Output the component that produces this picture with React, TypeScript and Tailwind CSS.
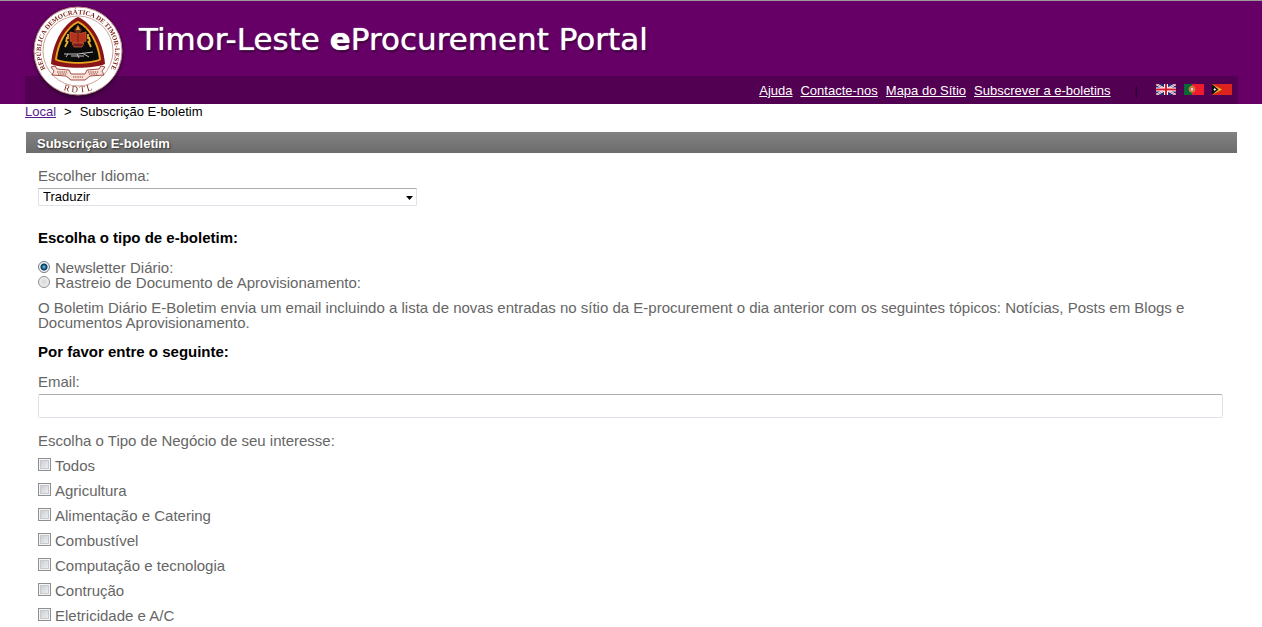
import { useState } from "react";

const navLinks = ["Ajuda", "Contacte-nos", "Mapa do Sítio", "Subscrever a e-boletins"];

const businessTypes = [
  "Todos",
  "Agricultura",
  "Alimentação e Catering",
  "Combustível",
  "Computação e tecnologia",
  "Contrução",
  "Eletricidade e A/C",
];

const radioClass =
  "mt-px size-3 shrink-0 appearance-none rounded-full border border-[#8e8f8f] bg-[radial-gradient(circle,#d4d6d8,#fafafa)] checked:border-[#6e7b85] checked:bg-[radial-gradient(circle_at_50%_50%,#6fd0f2_0px,#1c5f8a_2px,#0d3450_3px,#f4f4f4_4px)]";

const checkboxClass =
  "size-[13px] shrink-0 appearance-none border border-[#8e8f8f] bg-linear-to-br from-[#c3c7cc] to-[#f6f6f6] shadow-[inset_0_0_0_1px_#f4f4f4,inset_0_0_0_2px_#c6cad0] checked:from-[#4b6f9c] checked:to-[#7fa0c8]";

function Seal() {
  return (
    <svg viewBox="0 0 92 92" className="size-[92px] drop-shadow-[0_2px_2px_rgba(0,0,0,0.45)]" role="img" aria-label="República Democrática de Timor-Leste">
      <defs>
        <path id="seal-top" d="M16 68 A37 37 0 1 1 76 68" />
        <path id="seal-bottom" d="M22 80 A42 42 0 0 0 70 80" />
      </defs>
      <circle cx="46" cy="46" r="44" fill="#fff" stroke="#b98d86" strokeWidth="1" />
      <circle cx="46" cy="46" r="35" fill="none" stroke="#c08a80" strokeWidth="0.8" />
      <text fill="#7a1f14" fontSize="6.7" fontWeight="700" fontFamily="'Liberation Serif', serif">
        <textPath href="#seal-top" startOffset="50%" textAnchor="middle">REPÚBLICA DEMOCRÁTICA DE TIMOR-LESTE</textPath>
      </text>
      <path d="M46 12 C58 17 71 34 73 59 C61 64 31 64 19 59 C21 34 34 17 46 12Z" fill="#8a1416" />
      <path d="M46 16 C57 21 67 36 69 55 C59 60 33 60 23 55 C25 36 35 21 46 16Z" fill="#e9a420" />
      <path d="M46 18 C56 23 65 37 67 54 C58 58 34 58 25 54 C27 37 36 23 46 18Z" fill="#0b0b0c" />
      <path d="M46 20 L50 25 L48 28 H44 L42 25Z" fill="#6e2a1c" />
      <path d="M46 20 L48 25 H44Z" fill="#e0a838" />
      <path d="M38 27 L46 29 L54 27 V36 L46 39 L38 36Z" fill="#b2331e" stroke="#d2562e" strokeWidth="0.8" />
      <path d="M46 29 V38" stroke="#7a1712" strokeWidth="1" />
      <path d="M40 38 H52 L50 42 H42Z" fill="#7b1a16" stroke="#cf6a3c" strokeWidth="0.7" />
      <path d="M33 42 L36 36 M34 37 L35 32 M36 34 L36 29 M59 42 L56 36 M58 37 L57 32 M56 34 L56 29" stroke="#e8ae2a" strokeWidth="1.8" fill="none" />
      <path d="M32 49 H46 L61 47 M36 49 L34 52 M45 49 L47 53 M50 48 L57 52 M39 51 H52" stroke="#c4c4c0" strokeWidth="1" fill="none" />
      <path d="M19 62 L23 61 L25 64 L37 65 L39 69 H53 L55 65 L67 64 L69 61 L73 62 L70 66 L72 70 L58 71 L53 75 H39 L34 71 L20 70 L22 66Z" fill="#f6e3dc" stroke="#9b3a2c" strokeWidth="0.9" />
      <path d="M25 67 H36 M26 69 H35 M56 67 H67 M57 69 H66 M41 72 H51" stroke="#9b3a2c" strokeWidth="1.2" strokeDasharray="1.4 0.8" />
      <text fill="#7a1f14" fontSize="9" fontFamily="'Liberation Serif', serif">
        <textPath href="#seal-bottom" startOffset="50%" textAnchor="middle">R D T L</textPath>
      </text>
    </svg>
  );
}

function FlagUK() {
  return (
    <svg viewBox="0 0 20 11" className="h-[11px] w-5">
      <rect width="20" height="11" fill="#1c2f7c" />
      <path d="M0 0 L20 11 M20 0 L0 11" stroke="#fff" strokeWidth="2" />
      <path d="M0 0 L20 11 M20 0 L0 11" stroke="#d5283c" strokeWidth="0.7" />
      <path d="M10 0 V11 M0 5.5 H20" stroke="#fff" strokeWidth="4" />
      <path d="M10 0 V11 M0 5.5 H20" stroke="#d5182e" strokeWidth="2" />
    </svg>
  );
}

function FlagPortugal() {
  return (
    <svg viewBox="0 0 20 11" className="h-[11px] w-5">
      <rect width="20" height="11" fill="#ee1c2e" />
      <rect width="8" height="11" fill="#0b6638" />
      <circle cx="8" cy="5.3" r="2.9" fill="#e8412c" stroke="#b9a42e" strokeWidth="1" />
      <rect x="6.8" y="3.8" width="2.4" height="3" rx="0.8" fill="#d8dce8" />
    </svg>
  );
}

function FlagTimor() {
  return (
    <svg viewBox="0 0 20 11" className="h-[11px] w-5">
      <rect width="20" height="11" fill="#dc241c" />
      <path d="M0 0 L10 5.5 L0 11Z" fill="#f3b92b" />
      <path d="M0 0 L6.5 5.5 L0 11Z" fill="#0a0a0a" />
      <path d="M1 5.5 L2.2 4.9 L2.8 3.6 L3.4 4.9 L4.6 5.5 L3.4 6.1 L2.8 7.4 L2.2 6.1Z" fill="#fff" />
    </svg>
  );
}

export default function App() {
  const [kind, setKind] = useState("daily");

  return (
    <div className="bg-white font-['Liberation_Sans',Arial,sans-serif] text-[15px] leading-[15px] text-[#666]">
      <header className="relative border-t border-[#999] bg-[#660066] pr-6 pl-[25px]">
        <div className="flex h-[75px] items-center pl-[114px]">
          <h1 className="font-['DejaVu_Sans',sans-serif] text-[31px] leading-9 whitespace-nowrap text-white [text-shadow:0_0_1px_#fff,1px_2px_2px_rgba(0,0,0,0.5)]">
            Timor-Leste <b>e</b>Procurement Portal
          </h1>
        </div>
        <div className="flex h-7 items-center justify-end bg-[#520052] pr-1.5 text-[13px]">
          <nav className="flex gap-2 text-white">
            {navLinks.map((label) => (
              <a key={label} href="#" className="underline">
                {label}
              </a>
            ))}
          </nav>
          <span className="mr-[18px] ml-6 text-[#1e001e]">|</span>
          <div className="flex gap-2 pb-0.5">
            <a href="#" aria-label="English"><FlagUK /></a>
            <a href="#" aria-label="Português"><FlagPortugal /></a>
            <a href="#" aria-label="Tetum"><FlagTimor /></a>
          </div>
        </div>
        <a href="#" className="absolute top-1 left-8">
          <Seal />
        </a>
      </header>

      <div className="pr-6 pl-[25px]">
        <nav className="flex gap-2 text-[13px] text-black">
          <a href="#" className="text-[#551a8b] underline">Local</a>
          <span>&gt;</span>
          <span>Subscrição E-boletim</span>
        </nav>

        <main className="mx-px mt-[13px]">
          <h2 className="bg-linear-to-b from-[#828282] to-[#6c6c6c] pt-0.5 pl-[11px] text-[13px] leading-[19px] font-bold text-white [text-shadow:1px_1px_2px_rgba(0,0,0,0.6)]">
            Subscrição E-boletim
          </h2>

          <form className="pt-[15px] pr-3.5 pl-3">
            <label htmlFor="language" className="block">Escolher Idioma:</label>
            <div className="relative mt-[5px] w-[379px]">
              <select
                id="language"
                className="block h-[18px] w-full appearance-none rounded-[1px] border border-[#e2e3ea] border-t-[#abadb3] bg-white pl-1 text-[13px] leading-4 text-black"
              >
                <option>Traduzir</option>
              </select>
              <svg viewBox="0 0 7 4" className="pointer-events-none absolute top-2 right-1 h-1 w-[7px]">
                <path d="M0 0 H7 L3.5 4Z" fill="#000" />
              </svg>
            </div>

            <h3 className="mt-6 font-bold text-black">Escolha o tipo de e-boletim:</h3>
            <div className="mt-[15px]">
              <label className="flex gap-[5px]">
                <input type="radio" name="kind" className={radioClass} checked={kind === "daily"} onChange={() => setKind("daily")} />
                Newsletter Diário:
              </label>
              <label className="flex gap-[5px]">
                <input type="radio" name="kind" className={radioClass} checked={kind === "tracking"} onChange={() => setKind("tracking")} />
                Rastreio de Documento de Aprovisionamento:
              </label>
            </div>
            <p className="mt-2.5">
              O Boletim Diário E-Boletim envia um email incluindo a lista de novas entradas no sítio da E-procurement o dia anterior com os
              seguintes tópicos: Notícias, Posts em Blogs e Documentos Aprovisionamento.
            </p>

            <h3 className="mt-3.5 font-bold text-black">Por favor entre o seguinte:</h3>
            <label htmlFor="email" className="mt-[15px] block">Email:</label>
            <input
              id="email"
              type="email"
              className="mt-[5px] block h-6 w-full rounded-[2px] border border-[#e2e3ea] border-t-[#abadb3] bg-white px-1 text-black"
            />

            <fieldset className="mt-[15px]">
              <legend>Escolha o Tipo de Negócio de seu interesse:</legend>
              <div className="mt-2.5 flex flex-col gap-2.5">
                {businessTypes.map((name) => (
                  <label key={name} className="flex gap-1">
                    <input type="checkbox" className={checkboxClass} />
                    {name}
                  </label>
                ))}
              </div>
            </fieldset>
          </form>
        </main>
      </div>
    </div>
  );
}
